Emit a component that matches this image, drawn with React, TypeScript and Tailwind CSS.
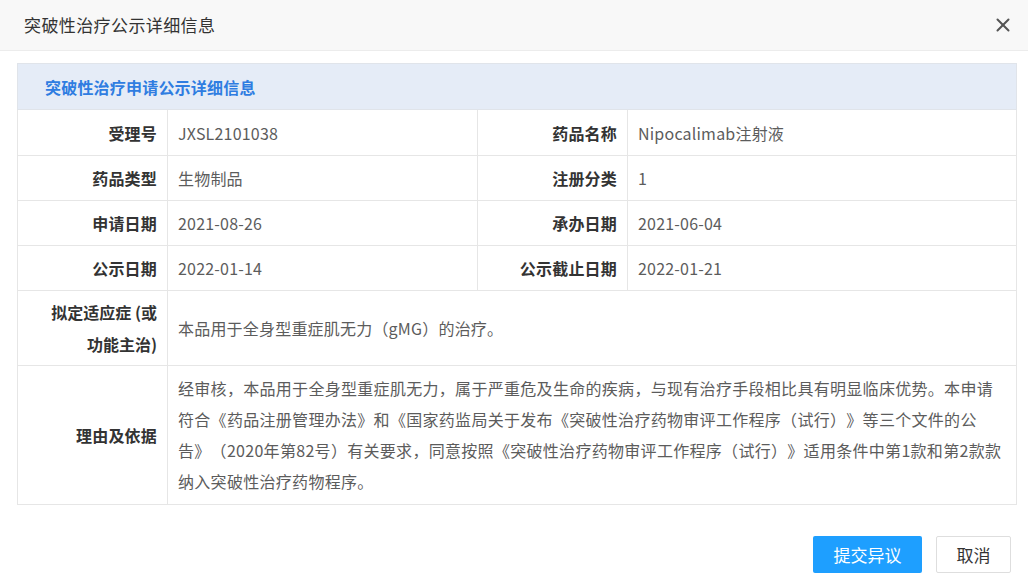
import { X } from 'lucide-react'

const font = { fontFamily: '"Microsoft YaHei", "Noto Sans CJK SC", "Noto Sans", sans-serif' }

function Label({ children }: { children: React.ReactNode }) {
  return (
    <td className="border border-[#e6e6e6] px-[10px] text-right align-middle text-[16px] font-bold tracking-[0.2px] text-[#333]">
      {children}
    </td>
  )
}

function Value({ children, colSpan }: { children: React.ReactNode; colSpan?: number }) {
  return (
    <td colSpan={colSpan} className="border border-[#e6e6e6] px-[10px] align-middle text-[16px] tracking-[0.2px] text-[#5c5c5c]">
      {children}
    </td>
  )
}

export default function App() {
  return (
    <div className="h-[582px] w-[1028px] overflow-hidden bg-white [text-spacing-trim:space-all]" style={font}>
      {/* Title bar */}
      <div className="flex h-[51px] items-center justify-between border-b border-[#ececec] bg-[#f8f8f8] pl-6 pr-[14px]">
        <span className="text-[17px] tracking-[0.4px] text-[#333]">突破性治疗公示详细信息</span>
        <X className="h-[22px] w-[22px] text-[#555]" strokeWidth={2.2} />
      </div>

      <div className="px-[17px] pt-[12px]">
        <table className="w-[1000px] table-fixed border-collapse border border-[#e6e6e6]">
          <colgroup>
            <col className="w-[150px]" />
            <col className="w-[310px]" />
            <col className="w-[150px]" />
            <col />
          </colgroup>
          <tbody>
            <tr className="h-[46px] bg-[#e5ecf7]">
              <td colSpan={4} className="border border-[#e0e4ea] pl-[27px] text-[16px] font-bold tracking-[0.2px] text-[#2f7de1]">
                突破性治疗申请公示详细信息
              </td>
            </tr>
            <tr className="h-[46px]">
              <Label>受理号</Label>
              <Value>JXSL2101038</Value>
              <Label>药品名称</Label>
              <Value>Nipocalimab注射液</Value>
            </tr>
            <tr className="h-[45px]">
              <Label>药品类型</Label>
              <Value>生物制品</Value>
              <Label>注册分类</Label>
              <Value>1</Value>
            </tr>
            <tr className="h-[45px]">
              <Label>申请日期</Label>
              <Value>2021-08-26</Value>
              <Label>承办日期</Label>
              <Value>2021-06-04</Value>
            </tr>
            <tr className="h-[45px]">
              <Label>公示日期</Label>
              <Value>2022-01-14</Value>
              <Label>公示截止日期</Label>
              <Value>2022-01-21</Value>
            </tr>
            <tr className="h-[75px]">
              <td className="border border-[#e6e6e6] px-[10px] text-right align-middle text-[16px] font-bold leading-[32px] text-[#333]">
                拟定适应症 (或<br />功能主治)
              </td>
              <Value colSpan={3}>本品用于全身型重症肌无力（gMG）的治疗。</Value>
            </tr>
            <tr className="h-[139px]">
              <Label>理由及依据</Label>
              <td colSpan={3} className="border border-[#e6e6e6] px-[10px] py-[6px] align-middle text-[16px] leading-[31px] tracking-[0.3px] text-[#5c5c5c]">
                经审核，本品用于全身型重症肌无力，属于严重危及生命的疾病，与现有治疗手段相比具有明显临床优势。本申请<br />
                符合《药品注册管理办法》和《国家药监局关于发布《突破性治疗药物审评工作程序（试行）》等三个文件的公<br />
                告》（2020年第82号）有关要求，同意按照《突破性治疗药物审评工作程序（试行）》适用条件中第1款和第2款款<br />
                纳入突破性治疗药物程序。
              </td>
            </tr>
          </tbody>
        </table>
      </div>

      <div className="flex justify-end gap-[14px] pr-[17px] pt-[31px]">
        <button className="h-[37px] w-[109px] rounded-[2px] bg-[#1e9fff] text-[17px] text-white">提交异议</button>
        <button className="h-[37px] w-[75px] rounded-[2px] border border-[#dedede] bg-white text-[17px] text-[#333]">取消</button>
      </div>
    </div>
  )
}
